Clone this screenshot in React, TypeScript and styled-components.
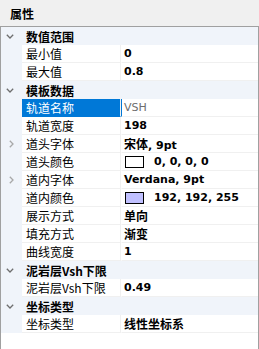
import React from 'react'
import styled, {createGlobalStyle} from 'styled-components'

const GlobalStyle = createGlobalStyle`
  html, body {
    margin: 0;
    padding: 0;
    background: #ffffff;
  }
  body {
    font-family: "DejaVu Sans", "Noto Sans CJK SC", sans-serif;
  }
`

type Item = {
  label: string
  value: string
  cjk?: boolean
  collapsed?: boolean
  selected?: boolean
  disabled?: boolean
  swatch?: string
}

type Group = {title: string; items: Item[]}

const groups: Group[] = [
  {
    title: '数值范围',
    items: [
      {label: '最小值', value: '0'},
      {label: '最大值', value: '0.8'},
    ],
  },
  {
    title: '模板数据',
    items: [
      {label: '轨道名称', value: 'VSH', selected: true, disabled: true},
      {label: '轨道宽度', value: '198'},
      {label: '道头字体', value: '宋体, 9pt', collapsed: true},
      {label: '道头颜色', value: '0, 0, 0, 0', swatch: '#ffffff'},
      {label: '道内字体', value: 'Verdana, 9pt', collapsed: true},
      {label: '道内颜色', value: '192, 192, 255', swatch: '#c0c0ff'},
      {label: '展示方式', value: '单向', cjk: true},
      {label: '填充方式', value: '渐变', cjk: true},
      {label: '曲线宽度', value: '1'},
    ],
  },
  {
    title: '泥岩层Vsh下限',
    items: [{label: '泥岩层Vsh下限', value: '0.49'}],
  },
  {
    title: '坐标类型',
    items: [{label: '坐标类型', value: '线性坐标系', cjk: true}],
  },
]

function App() {
  return (
    <Window>
      <GlobalStyle />
      <TitleBar>属性</TitleBar>
      <Grid>
        {groups.map((g) => (
          <React.Fragment key={g.title}>
            <CategoryRow>
              <Gutter>
                <ChevronDown />
              </Gutter>
              <CategoryTitle>{g.title}</CategoryTitle>
            </CategoryRow>
            {g.items.map((it) => (
              <PropRow key={it.label}>
                <Gutter>{it.collapsed && <ChevronRight />}</Gutter>
                <NameCell $selected={it.selected}>{it.label}</NameCell>
                <ValueCell $selected={it.selected} $disabled={it.disabled} $cjk={it.cjk}>
                  {it.swatch && <Swatch $color={it.swatch} />}
                  <span>{renderValue(it.value)}</span>
                </ValueCell>
              </PropRow>
            ))}
          </React.Fragment>
        ))}
      </Grid>
    </Window>
  )
}

function renderValue(v: string) {
  // CJK runs are drawn slightly larger than latin, as in the original control
  const parts = v.split(/([\u4e00-\u9fff]+)/).filter(Boolean)
  return parts.map((p, i) =>
    /[\u4e00-\u9fff]/.test(p) ? <Cjk key={i}>{p}</Cjk> : <span key={i}>{p}</span>
  )
}

function ChevronDown() {
  return (
    <svg width="8" height="5" viewBox="0 0 8 5">
      <polyline points="0.8,0.8 4,4 7.2,0.8" fill="none" stroke="#6e6e6e" strokeWidth="1.3" />
    </svg>
  )
}

function ChevronRight() {
  return (
    <ChevronRightSvg width="5" height="8" viewBox="0 0 5 8">
      <polyline points="0.8,0.8 4,4 0.8,7.2" fill="none" stroke="#a8a8a8" strokeWidth="1.3" />
    </ChevronRightSvg>
  )
}

const Window = styled.div`
  width: 259px;
  height: 349px;
  display: flex;
  flex-direction: column;
  background: #f0f0f0;
  overflow: hidden;
`

const TitleBar = styled.div`
  height: 26px;
  flex: none;
  display: flex;
  align-items: center;
  padding-left: 10px;
  font-family: "Noto Sans CJK SC", sans-serif;
  font-size: 12px;
  font-weight: 700;
  color: #000;
`

const Grid = styled.div`
  flex: 1;
  background: #ffffff;
  border-top: 1px solid #a0a0a0;
  border-left: 1px solid #a0a0a0;
  border-right: 1px solid #a0a0a0;
  display: flex;
  flex-direction: column;
`

const CategoryRow = styled.div`
  height: 18px;
  display: grid;
  grid-template-columns: 21px 1fr;
  background: #f0f4fa;
`

const Gutter = styled.div`
  background: #f0f4fa;
  display: flex;
  align-items: center;
  padding-left: 5px;
`

const ChevronRightSvg = styled.svg`
  margin-left: 3px;
`

const CategoryTitle = styled.div`
  padding-left: 4px;
  display: flex;
  align-items: center;
  font-family: "Noto Sans CJK SC", sans-serif;
  font-size: 12px;
  font-weight: 700;
  color: #000;
  white-space: nowrap;
`

const PropRow = styled.div`
  height: 18px;
  display: grid;
  grid-template-columns: 21px 99px 1fr;
`

const NameCell = styled.div<{$selected?: boolean}>`
  padding-left: 4px;
  display: flex;
  align-items: center;
  font-family: "Noto Sans CJK SC", sans-serif;
  font-size: 12px;
  white-space: nowrap;
  background: ${({$selected}) => ($selected ? '#0078d7' : '#ffffff')};
  color: ${({$selected}) => ($selected ? '#ffffff' : '#000000')};
  border-bottom: 1px solid ${({$selected}) => ($selected ? '#0078d7' : '#f0f0f0')};
  border-right: 1px solid #f0f0f0;
  box-sizing: border-box;
`

const ValueCell = styled.div<{$selected?: boolean; $disabled?: boolean; $cjk?: boolean}>`
  display: flex;
  align-items: center;
  padding-left: 2px;
  box-sizing: border-box;
  border-left: 1px solid ${({$selected}) => ($selected ? '#0078d7' : '#ffffff')};
  border-bottom: 1px solid #f0f0f0;
  font-size: ${({$cjk}) => ($cjk ? '12px' : '11px')};
  font-weight: ${({$disabled}) => ($disabled ? 400 : 700)};
  color: ${({$disabled}) => ($disabled ? '#6d6d6d' : '#000000')};
  white-space: nowrap;
`

const Cjk = styled.span`
  font-family: "Noto Sans CJK SC", sans-serif;
  font-size: 12px;
`

const Swatch = styled.span<{$color: string}>`
  width: 17px;
  height: 10px;
  margin-left: 1px;
  margin-right: 10px;
  border: 1px solid #000;
  background: ${({$color}) => $color};
  flex: none;
`

export default App
